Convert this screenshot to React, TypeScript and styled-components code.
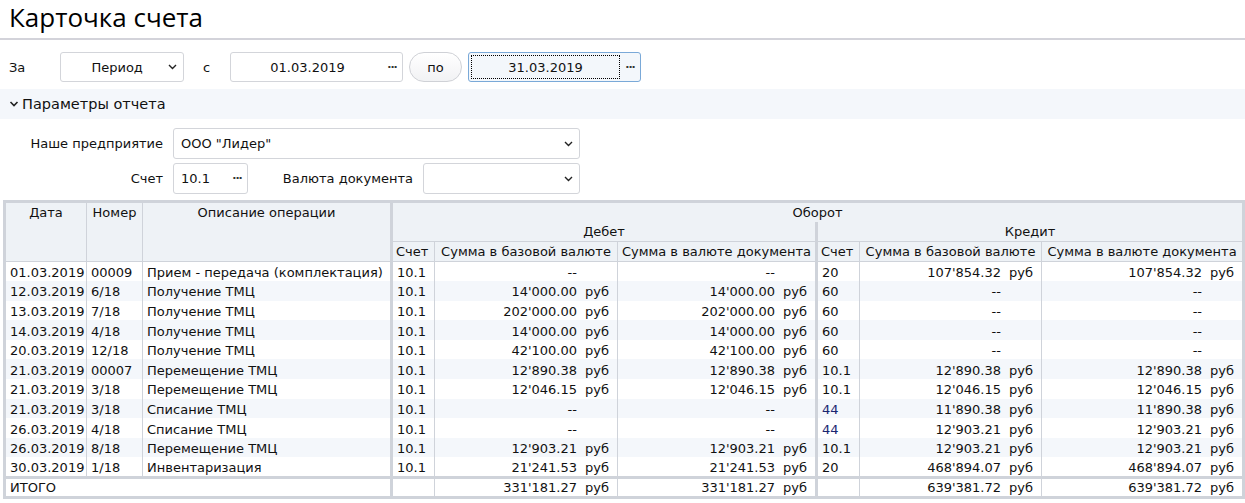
import React from "react";
import styled, { createGlobalStyle } from "styled-components";

const GlobalStyle = createGlobalStyle`
  html, body {
    margin: 0;
    padding: 0;
    background: #ffffff;
  }
  body {
    font-family: "DejaVu Sans", Verdana, sans-serif;
    font-size: 13px;
    color: #111;
  }
`;

type Row = {
  date: string;
  num: string;
  desc: string;
  dAcc: string;
  dBase: string | null;
  dDoc: string | null;
  cAcc: string;
  cBase: string | null;
  cDoc: string | null;
};

const rows: Row[] = [
  { date: "01.03.2019", num: "00009", desc: "Прием - передача (комплектация)", dAcc: "10.1", dBase: null, dDoc: null, cAcc: "20", cBase: "107'854.32", cDoc: "107'854.32" },
  { date: "12.03.2019", num: "6/18", desc: "Получение ТМЦ", dAcc: "10.1", dBase: "14'000.00", dDoc: "14'000.00", cAcc: "60", cBase: null, cDoc: null },
  { date: "13.03.2019", num: "7/18", desc: "Получение ТМЦ", dAcc: "10.1", dBase: "202'000.00", dDoc: "202'000.00", cAcc: "60", cBase: null, cDoc: null },
  { date: "14.03.2019", num: "4/18", desc: "Получение ТМЦ", dAcc: "10.1", dBase: "14'000.00", dDoc: "14'000.00", cAcc: "60", cBase: null, cDoc: null },
  { date: "20.03.2019", num: "12/18", desc: "Получение ТМЦ", dAcc: "10.1", dBase: "42'100.00", dDoc: "42'100.00", cAcc: "60", cBase: null, cDoc: null },
  { date: "21.03.2019", num: "00007", desc: "Перемещение ТМЦ", dAcc: "10.1", dBase: "12'890.38", dDoc: "12'890.38", cAcc: "10.1", cBase: "12'890.38", cDoc: "12'890.38" },
  { date: "21.03.2019", num: "3/18", desc: "Перемещение ТМЦ", dAcc: "10.1", dBase: "12'046.15", dDoc: "12'046.15", cAcc: "10.1", cBase: "12'046.15", cDoc: "12'046.15" },
  { date: "21.03.2019", num: "3/18", desc: "Списание ТМЦ", dAcc: "10.1", dBase: null, dDoc: null, cAcc: "44", cBase: "11'890.38", cDoc: "11'890.38" },
  { date: "26.03.2019", num: "4/18", desc: "Списание ТМЦ", dAcc: "10.1", dBase: null, dDoc: null, cAcc: "44", cBase: "12'903.21", cDoc: "12'903.21" },
  { date: "26.03.2019", num: "8/18", desc: "Перемещение ТМЦ", dAcc: "10.1", dBase: "12'903.21", dDoc: "12'903.21", cAcc: "10.1", cBase: "12'903.21", cDoc: "12'903.21" },
  { date: "30.03.2019", num: "1/18", desc: "Инвентаризация", dAcc: "10.1", dBase: "21'241.53", dDoc: "21'241.53", cAcc: "20", cBase: "468'894.07", cDoc: "468'894.07" },
];

const GRID = "#cfd3da";
const HEAD_BG = "#eef2f6";
const STRIPE = "#f4f7fb";

const Page = styled.div`
  width: 1245px;
`;

const TitleBar = styled.div`
  height: 40px;
  border-bottom: 2px solid #d3d3da;
  box-sizing: border-box;
  padding-left: 9px;
  display: flex;
  align-items: center;
`;

const Title = styled.h1`
  margin: 0;
  font-family: "Open Sans", "DejaVu Sans", sans-serif;
  font-weight: 400;
  font-size: 26px;
  color: #000;
  line-height: 1;
  margin-top: -4px;
`;

const Toolbar = styled.div`
  display: flex;
  align-items: center;
  height: 30px;
  margin-top: 12px;
`;

const Label = styled.span<{ $w: number; $pl?: number }>`
  width: ${(p) => p.$w}px;
  padding-left: ${(p) => p.$pl ?? 0}px;
  box-sizing: border-box;
  flex: none;
`;

const Field = styled.div<{ $w: number; $focus?: boolean }>`
  width: ${(p) => p.$w}px;
  height: 30px;
  box-sizing: border-box;
  border: 1px solid ${(p) => (p.$focus ? "#7aa9d8" : "#d3d5da")};
  border-radius: 3px;
  background: ${(p) => (p.$focus ? "#f3f7fb" : "#fff")};
  display: flex;
  align-items: center;
  flex: none;
`;

const FieldText = styled.div<{ $center?: boolean; $focus?: boolean }>`
  flex: 1;
  align-self: stretch;
  margin: 2px 0 2px 2px;
  display: flex;
  align-items: center;
  justify-content: ${(p) => (p.$center ? "center" : "flex-start")};
  padding-left: ${(p) => (p.$center ? 0 : 4)}px;
  border: 1px dotted ${(p) => (p.$focus ? "#000" : "transparent")};
  white-space: nowrap;
`;

const Dots = styled.span`
  width: 20px;
  text-align: center;
  font-size: 11px;
  font-weight: bold;
  letter-spacing: -1px;
  line-height: 1;
  margin-top: -6px;
  color: #333;
`;

const Chevron = styled.svg`
  width: 20px;
  height: 8px;
  flex: none;
`;

const PillButton = styled.button`
  width: 53px;
  height: 30px;
  margin: 0 6px 0 6px;
  border: 1px solid #cfd1d6;
  border-radius: 15px;
  background: linear-gradient(#ffffff, #f1f2f4);
  font-family: inherit;
  font-size: 13px;
  color: #111;
  padding: 0;
  flex: none;
`;

const SectionBar = styled.div`
  margin-top: 7px;
  height: 30px;
  background: #f4f7fb;
  display: flex;
  align-items: center;
  padding-left: 9px;
  font-size: 14.5px;
  gap: 3px;
`;

const Form = styled.div`
  display: grid;
  grid-template-columns: 163px 75px 322px;
  column-gap: 10px;
  row-gap: 4px;
  margin-top: 9px;
`;

const FormLabel = styled.div`
  display: flex;
  align-items: center;
  justify-content: flex-end;
  height: 31px;
`;

const FormBox = styled.div<{ $span?: number; $w?: number }>`
  grid-column: span ${(p) => p.$span ?? 1};
  ${(p) => (p.$w ? `width: ${p.$w}px;` : "")}
  height: 31px;
  box-sizing: border-box;
  border: 1px solid #d3d5da;
  border-radius: 3px;
  display: flex;
  align-items: center;
  background: #fff;
`;

const FormCell = styled.div`
  display: flex;
  align-items: center;
  justify-content: flex-end;
  gap: 10px;
`;

const TableWrap = styled.div`
  margin: 6px 3px 0 3px;
`;

const Table = styled.table`
  width: 1239px;
  border-collapse: collapse;
  table-layout: fixed;
  border: 3px solid ${GRID};
  white-space: nowrap;
`;

const Th = styled.th<{ $left?: boolean; $thick?: boolean; $noBottom?: boolean; $noLine?: boolean }>`
  background: ${HEAD_BG};
  font-weight: 400;
  height: 19px;
  padding: 0 3px;
  vertical-align: top;
  text-align: ${(p) => (p.$left ? "left" : "center")};
  border-left: ${(p) => (p.$thick ? `3px solid ${GRID}` : p.$noLine ? "none" : `1px solid ${GRID}`)};
  border-bottom: ${(p) => (p.$noBottom ? "none" : `1px solid ${GRID}`)};
  overflow: hidden;
  line-height: 19px;
`;

const Tr = styled.tr<{ $stripe: boolean; $first?: boolean }>`
  background: ${(p) => (p.$stripe ? STRIPE : "#fff")};
  ${(p) => (p.$first ? "border-top: 1px dotted #000;" : "")}
`;

const Td = styled.td<{ $thick?: boolean; $right?: boolean; $blue?: boolean; $first?: boolean }>`
  height: 19.6px;
  padding: 2px 3px 0 4px;
  box-sizing: border-box;
  line-height: 17px;
  border-left: ${(p) => (p.$first ? "none" : `${p.$thick ? "3px" : "1px"} solid ${GRID}`)};
  text-align: ${(p) => (p.$right ? "right" : "left")};
  color: ${(p) => (p.$blue ? "#1a2670" : "#111")};
  overflow: hidden;
`;

const FootRow = styled.tr`
  border-top: 3px solid ${GRID};
  background: #fff;
  & > td {
    height: 17px;
    padding-top: 0;
    line-height: 17px;
  }
`;

const AmountBox = styled.div`
  display: flex;
  justify-content: flex-end;
  padding-right: 4px;
`;

const Unit = styled.span`
  width: 25px;
  margin-left: 8px;
  text-align: left;
`;

const SelectChevron = () => (
  <Chevron viewBox="0 0 20 8">
    <polyline points="6,2 9.5,5.5 13,2" fill="none" stroke="#222" strokeWidth="1.4" />
  </Chevron>
);

const Amount = ({ v }: { v: string | null }) => (
  <AmountBox>
    <span>{v ?? "--"}</span>
    <Unit>{v ? "руб" : ""}</Unit>
  </AmountBox>
);

export default function App() {
  return (
    <Page>
      <GlobalStyle />
      <TitleBar>
        <Title>Карточка счета</Title>
      </TitleBar>

      <Toolbar>
        <Label $w={60} $pl={9}>За</Label>
        <Field $w={124}>
          <FieldText $center>&nbsp;&nbsp;Период</FieldText>
          <SelectChevron />
        </Field>
        <Label $w={46} $pl={19}>с</Label>
        <Field $w={173}>
          <FieldText $center>01.03.2019</FieldText>
          <Dots>...</Dots>
        </Field>
        <PillButton>по</PillButton>
        <Field $w={173} $focus>
          <FieldText $center $focus>31.03.2019</FieldText>
          <Dots>...</Dots>
        </Field>
      </Toolbar>

      <SectionBar>
        <svg width="10" height="8" viewBox="0 0 10 8">
          <polyline points="1.5,2 5,5.5 8.5,2" fill="none" stroke="#222" strokeWidth="1.6" />
        </svg>
        <span>Параметры отчета</span>
      </SectionBar>

      <Form>
        <FormLabel>Наше предприятие</FormLabel>
        <FormBox $span={2}>
          <FieldText>ООО "Лидер"</FieldText>
          <SelectChevron />
        </FormBox>
        <FormLabel>Счет</FormLabel>
        <FormBox>
          <FieldText>10.1</FieldText>
          <Dots>...</Dots>
        </FormBox>
        <FormCell>
          <span>Валюта документа</span>
          <FormBox $w={157}>
            <FieldText />
            <SelectChevron />
          </FormBox>
        </FormCell>
      </Form>

      <TableWrap>
        <Table>
          <colgroup>
            <col style={{ width: 82 }} />
            <col style={{ width: 56 }} />
            <col style={{ width: 249 }} />
            <col style={{ width: 43 }} />
            <col style={{ width: 183 }} />
            <col style={{ width: 199 }} />
            <col style={{ width: 43 }} />
            <col style={{ width: 182 }} />
            <col style={{ width: 202 }} />
          </colgroup>
          <thead>
            <tr>
              <Th rowSpan={3} $noLine>Дата</Th>
              <Th rowSpan={3}>Номер</Th>
              <Th rowSpan={3}>Описание операции</Th>
              <Th colSpan={6} $thick $noBottom>Оборот</Th>
            </tr>
            <tr>
              <Th colSpan={3} $thick>Дебет</Th>
              <Th colSpan={3} $thick>Кредит</Th>
            </tr>
            <tr>
              <Th $thick $left>Счет</Th>
              <Th>Сумма в базовой валюте</Th>
              <Th>Сумма в валюте документа</Th>
              <Th $thick $left>Счет</Th>
              <Th>Сумма в базовой валюте</Th>
              <Th>Сумма в валюте документа</Th>
            </tr>
          </thead>
          <tbody>
            {rows.map((r, i) => (
              <Tr key={i} $stripe={i % 2 === 1} $first={i === 0}>
                <Td $first>{r.date}</Td>
                <Td>{r.num}</Td>
                <Td>{r.desc}</Td>
                <Td $thick>{r.dAcc}</Td>
                <Td><Amount v={r.dBase} /></Td>
                <Td><Amount v={r.dDoc} /></Td>
                <Td $thick $blue={r.cAcc === "44"}>{r.cAcc}</Td>
                <Td><Amount v={r.cBase} /></Td>
                <Td><Amount v={r.cDoc} /></Td>
              </Tr>
            ))}
            <FootRow>
              <Td colSpan={3} $first>ИТОГО</Td>
              <Td $thick />
              <Td><Amount v="331'181.27" /></Td>
              <Td><Amount v="331'181.27" /></Td>
              <Td $thick />
              <Td><Amount v="639'381.72" /></Td>
              <Td><Amount v="639'381.72" /></Td>
            </FootRow>
          </tbody>
        </Table>
      </TableWrap>
    </Page>
  );
}
